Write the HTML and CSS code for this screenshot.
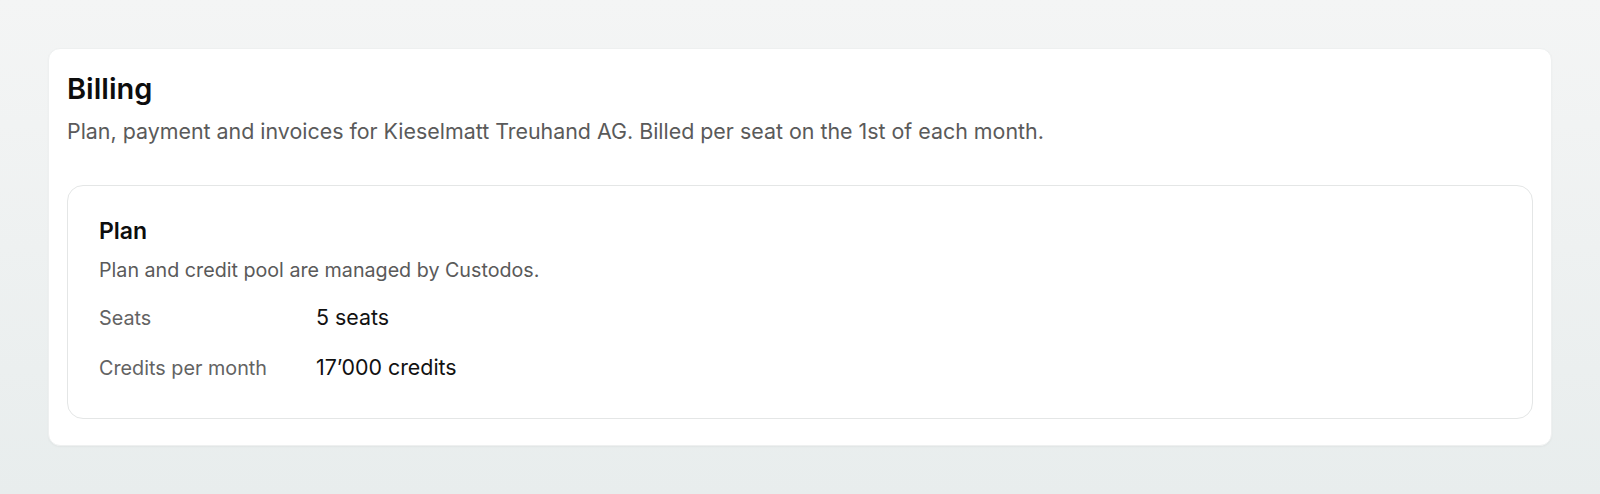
FILE: index.html
```html
<!DOCTYPE html>
<html lang="en">
<head>
<meta charset="utf-8">
<title>Billing</title>
<link rel="stylesheet" href="styles.css">
</head>
<body>
<main class="page">
  <section class="card">
    <header class="card-head">
      <h1 class="title">Billing</h1>
      <p class="subtitle">Plan, payment and invoices for Kieselmatt Treuhand AG. Billed per seat on the 1st of each month.</p>
    </header>
    <div class="panel">
      <h2 class="panel-title">Plan</h2>
      <p class="panel-desc">Plan and credit pool are managed by Custodos.</p>
      <dl class="facts">
        <div class="fact">
          <dt class="fact-label">Seats</dt>
          <dd class="fact-value">5 seats</dd>
        </div>
        <div class="fact">
          <dt class="fact-label">Credits per month</dt>
          <dd class="fact-value">17’000 credits</dd>
        </div>
      </dl>
    </div>
  </section>
</main>
</body>
</html>
```

FILE: styles.css
```css
* { box-sizing: border-box; }
html, body { margin: 0; height: 100%; }
body {
  font-family: Inter, "Noto Sans", "Liberation Sans", sans-serif;
  background: linear-gradient(180deg, #f4f5f5 0%, #e8eded 100%);
  color: #111;
}
.page {
  padding: 48px;
}
.card {
  background: #fff;
  border: 1px solid #eef0f0;
  border-radius: 12px;
  padding: 22px 18px 26px;
  box-shadow: 0 1px 2px rgba(20, 30, 30, 0.04);
}
.title {
  margin: 0;
  font-size: 29px;
  line-height: 36px;
  font-weight: 600;
  color: #0d0d0d;
}
.subtitle {
  margin: 9px 0 0;
  font-size: 21.4px;
  line-height: 30px;
  color: #5a5a5a;
}
.panel {
  margin-top: 39px;
  border: 1px solid #e4e6e6;
  border-radius: 16px;
  padding: 30px 31px 35px;
}
.panel-title {
  margin: 0;
  font-size: 23px;
  line-height: 30px;
  font-weight: 600;
  color: #0d0d0d;
}
.panel-desc {
  margin: 10px 0 0;
  font-size: 19.7px;
  line-height: 28px;
  color: #5a5a5a;
}
.facts {
  margin: 18px 0 0;
  display: grid;
  gap: 19px;
}
.fact {
  display: grid;
  grid-template-columns: 217px 1fr;
  align-items: baseline;
}
.fact-label {
  font-size: 19.8px;
  line-height: 30px;
  color: #636363;
}
.fact-value {
  margin: 0;
  font-size: 21.4px;
  line-height: 30px;
  color: #111;
}
```
